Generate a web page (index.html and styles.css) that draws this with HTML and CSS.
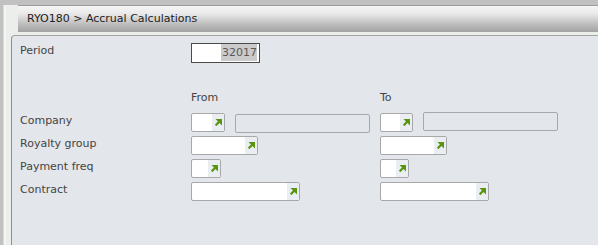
FILE: index.html
```html
<!DOCTYPE html>
<html lang="en">
<head>
    <meta charset="UTF-8">
    <title>RYO180 &gt; Accrual Calculations</title>
    <link rel="stylesheet" href="styles.css">
</head>
<body>
    <div class="window">
        <!-- program title -->
        <div class="titlebar">RYO180 &gt; Accrual Calculations</div>

        <div class="panel">
            <div class="row period-row">
                <span class="label">Period</span>
                <div class="period-input"><span class="selected">32017</span></div>
            </div>

            <div class="row head-row">
                <span></span>
                <span class="col-head">From</span>
                <span class="col-head">To</span>
            </div>

            <div class="row">
                <span class="label">Company</span>
                <div class="cell">
                    <div class="lookup w-company"><span class="btn"><svg viewBox="0 0 7 7"><path d="M2 0H7V5Z"/><path d="M0.6 6.4L4.6 2.4" /></svg></span></div>
                    <div class="desc"></div>
                </div>
                <div class="cell">
                    <div class="lookup w-company2"><span class="btn"><svg viewBox="0 0 7 7"><path d="M2 0H7V5Z"/><path d="M0.6 6.4L4.6 2.4" /></svg></span></div>
                    <div class="desc to-desc"></div>
                </div>
            </div>

            <div class="row">
                <span class="label">Royalty group</span>
                <div class="cell">
                    <div class="lookup w-group"><span class="btn"><svg viewBox="0 0 7 7"><path d="M2 0H7V5Z"/><path d="M0.6 6.4L4.6 2.4" /></svg></span></div>
                </div>
                <div class="cell">
                    <div class="lookup w-group"><span class="btn"><svg viewBox="0 0 7 7"><path d="M2 0H7V5Z"/><path d="M0.6 6.4L4.6 2.4" /></svg></span></div>
                </div>
            </div>

            <div class="row">
                <span class="label">Payment freq</span>
                <div class="cell">
                    <div class="lookup w-freq"><span class="btn"><svg viewBox="0 0 7 7"><path d="M2 0H7V5Z"/><path d="M0.6 6.4L4.6 2.4" /></svg></span></div>
                </div>
                <div class="cell">
                    <div class="lookup w-freq2"><span class="btn"><svg viewBox="0 0 7 7"><path d="M2 0H7V5Z"/><path d="M0.6 6.4L4.6 2.4" /></svg></span></div>
                </div>
            </div>

            <div class="row">
                <span class="label">Contract</span>
                <div class="cell">
                    <div class="lookup w-contract"><span class="btn"><svg viewBox="0 0 7 7"><path d="M2 0H7V5Z"/><path d="M0.6 6.4L4.6 2.4" /></svg></span></div>
                </div>
                <div class="cell">
                    <div class="lookup w-contract"><span class="btn"><svg viewBox="0 0 7 7"><path d="M2 0H7V5Z"/><path d="M0.6 6.4L4.6 2.4" /></svg></span></div>
                </div>
            </div>
        </div>
    </div>
</body>
</html>
```

FILE: styles.css
```css
body {
    margin: 0;
    background-color: #c1c1c1;
    font-family: "DejaVu Sans", Verdana, sans-serif;
    font-size: 11px;
    color: #444;
    overflow: hidden;
}
/* outer frame with the light rail on the left */
.window {
    margin-left: 3px;
    height: 240px;
    margin-top: 5px;
    padding-left: 8px;
    display: flex;
    flex-direction: column;
    background: linear-gradient(to right, #d9d9d9 0 1px, #f4f4f4 1px 3px, #eceeec 3px);
}
.titlebar {
    margin-left: 7px;
    height: 26px;
    line-height: 26px;
    padding-left: 9px;
    border-top: 1px solid #9d9d9d;
    color: #222;
    background: linear-gradient(#f6f6f6, #e9e9e9 30%, #bdbdbd 70%, #a2a2a2);
    margin-bottom: 3px;
}
.panel {
    flex: 1;
    background-color: #e3e6ea;
    border-top: 1px solid #a3a3a3;
    border-left: 1px solid #8f8f8f;
    border-top-left-radius: 4px;
    padding: 7px 0 0 8px;
}
.row {
    display: grid;
    grid-template-columns: 171px 189px auto;
    height: 19px;
    margin-bottom: 4px;
}
.label {
    line-height: 16px;
}
.period-row {
    height: 20px;
    margin-bottom: 27px;
}
.period-input {
    width: 65px;
    height: 18px;
    border: 1px solid #4a4a4a;
    background-color: #fff;
    text-align: right;
    padding-right: 2px;
    line-height: 18px;
    color: #5a5a5a;
}
.selected {
    background-color: #cbcbcb;
    padding: 2px 0 2px 1px;
}
.head-row {
    height: 15px;
    margin-bottom: 8px;
}
.col-head {
    line-height: 16px;
}
.cell {
    display: flex;
    gap: 10px;
}
/* lookup field with the green jump arrow */
.lookup {
    height: 17px;
    border: 1px solid #a8a8a8;
    border-radius: 2px;
    background-color: #fff;
    display: flex;
    justify-content: flex-end;
}
.btn {
    width: 12px;
    background-color: #eaeef3;
    display: flex;
    align-items: center;
    justify-content: center;
}
.btn svg {
    width: 7px;
    height: 7px;
    fill: #5a9410;
    stroke: #5a9410;
    stroke-width: 2.2;
}
.w-company { width: 32px; }
.w-company2 { width: 31px; }
.w-group { width: 65px; }
.w-freq { width: 28px; }
.w-freq2 { width: 27px; }
.w-contract { width: 107px; }
.desc {
    width: 133px;
    height: 17px;
    margin-top: 1px;
    border: 1px solid #a8a8a8;
    border-radius: 2px;
    background-color: #e3e6ea;
}
.to-desc {
    margin-top: -1px;
}
```
